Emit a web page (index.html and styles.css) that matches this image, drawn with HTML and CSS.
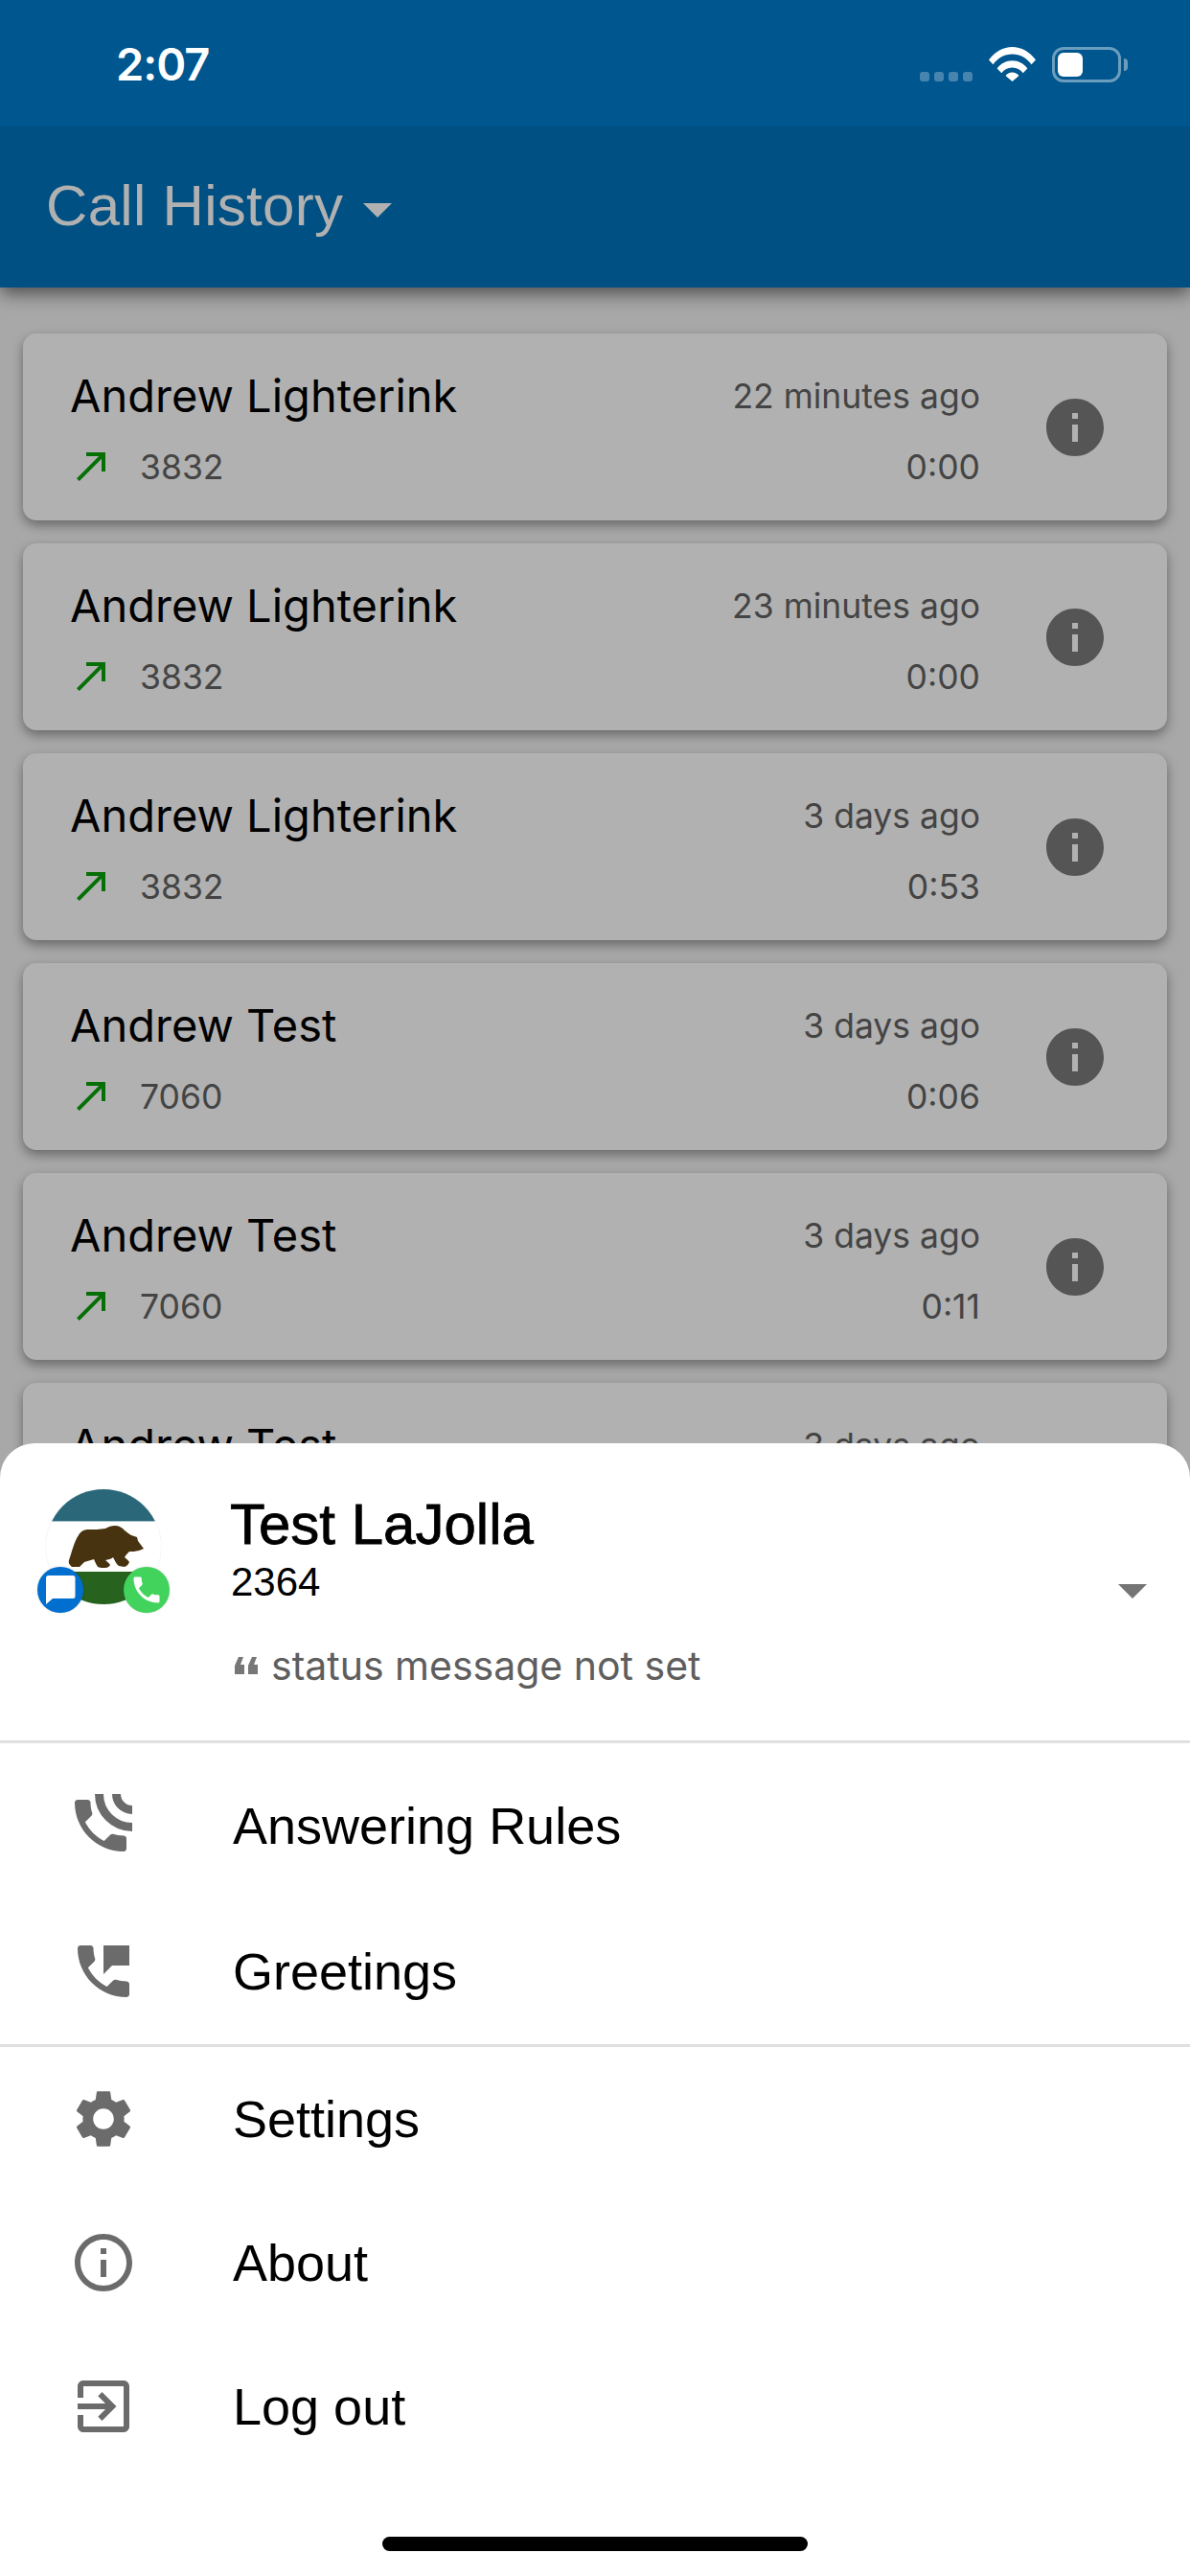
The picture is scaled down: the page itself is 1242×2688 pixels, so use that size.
FILE: index.html
```html
<!DOCTYPE html>
<html lang="en">
<head>
  <meta charset="UTF-8">
  <meta name="viewport" content="width=device-width, initial-scale=1.0">
  <title>Call History</title>
  <link rel="stylesheet" href="styles.css">
</head>
<body>
  <svg class="sprite" width="0" height="0">
    <symbol id="i-info" viewBox="0 0 24 24"><path d="M12 2C6.48 2 2 6.48 2 12s4.48 10 10 10 10-4.48 10-10S17.52 2 12 2zm1 15h-2v-6h2v6zm0-8h-2V7h2v2z"/></symbol>
    <symbol id="i-made" viewBox="0 0 24 24"><path d="M9 5v2h6.59L4 18.59 5.41 20 17 8.41V15h2V5z"/></symbol>
    <symbol id="i-drop" viewBox="0 0 24 24"><path d="M7 10l5 5 5-5z"/></symbol>
  </svg>

  <div class="screen">
    <div class="status-bar">
      <span class="clock">2:07</span>
      <div class="status-icons">
        <div class="signal"><i></i><i></i><i></i><i></i></div>
        <svg class="wifi" viewBox="0 0 49 36"><path d="M0 13.5C6.500 5 15 0 24.500 0S42.500 5 49 13.500l-4.500 4.700C39.500 11.500 32.500 7.500 24.500 7.500S9.500 11.500 4.500 18.200zM8.700 22.500C12.500 17.300 18 14.300 24.500 14.300s12 3 15.800 8.200l-4.600 4.700c-2.700-3.700-6.600-5.800-11.200-5.800s-8.500 2.100-11.200 5.800zM17.500 30c1.700-2.300 4.100-3.600 7-3.600s5.300 1.300 7 3.600l-7 6z"/></svg>
        <div class="battery"><div class="battery-fill"></div></div>
        <div class="battery-nub"></div>
      </div>
    </div>

    <header class="app-bar">
      <h1>Call History</h1>
      <svg class="app-bar-drop" viewBox="0 0 24 24"><use href="#i-drop"/></svg>
    </header>

    <main class="call-list">
      <div class="call-card">
        <div class="call-main">
          <div class="call-row"><span class="call-name">Andrew Lighterink</span><span class="call-meta">22 minutes ago</span></div>
          <div class="call-row">
            <div class="call-number"><svg class="call-arrow" viewBox="0 0 24 24"><use href="#i-made"/></svg><span class="call-meta">3832</span></div>
            <span class="call-meta">0:00</span>
          </div>
        </div>
        <svg class="call-info" viewBox="0 0 24 24"><use href="#i-info"/></svg>
      </div>
      <div class="call-card">
        <div class="call-main">
          <div class="call-row"><span class="call-name">Andrew Lighterink</span><span class="call-meta">23 minutes ago</span></div>
          <div class="call-row">
            <div class="call-number"><svg class="call-arrow" viewBox="0 0 24 24"><use href="#i-made"/></svg><span class="call-meta">3832</span></div>
            <span class="call-meta">0:00</span>
          </div>
        </div>
        <svg class="call-info" viewBox="0 0 24 24"><use href="#i-info"/></svg>
      </div>
      <div class="call-card">
        <div class="call-main">
          <div class="call-row"><span class="call-name">Andrew Lighterink</span><span class="call-meta">3 days ago</span></div>
          <div class="call-row">
            <div class="call-number"><svg class="call-arrow" viewBox="0 0 24 24"><use href="#i-made"/></svg><span class="call-meta">3832</span></div>
            <span class="call-meta">0:53</span>
          </div>
        </div>
        <svg class="call-info" viewBox="0 0 24 24"><use href="#i-info"/></svg>
      </div>
      <div class="call-card">
        <div class="call-main">
          <div class="call-row"><span class="call-name">Andrew Test</span><span class="call-meta">3 days ago</span></div>
          <div class="call-row">
            <div class="call-number"><svg class="call-arrow" viewBox="0 0 24 24"><use href="#i-made"/></svg><span class="call-meta">7060</span></div>
            <span class="call-meta">0:06</span>
          </div>
        </div>
        <svg class="call-info" viewBox="0 0 24 24"><use href="#i-info"/></svg>
      </div>
      <div class="call-card">
        <div class="call-main">
          <div class="call-row"><span class="call-name">Andrew Test</span><span class="call-meta">3 days ago</span></div>
          <div class="call-row">
            <div class="call-number"><svg class="call-arrow" viewBox="0 0 24 24"><use href="#i-made"/></svg><span class="call-meta">7060</span></div>
            <span class="call-meta">0:11</span>
          </div>
        </div>
        <svg class="call-info" viewBox="0 0 24 24"><use href="#i-info"/></svg>
      </div>
      <div class="call-card">
        <div class="call-main">
          <div class="call-row"><span class="call-name">Andrew Test</span><span class="call-meta">3 days ago</span></div>
        </div>
        <svg class="call-info" viewBox="0 0 24 24"><use href="#i-info"/></svg>
      </div>
    </main>

    <!-- bottom sheet, sits over the list -->
    <section class="sheet">
      <div class="profile">
        <div class="avatar">
          <svg class="avatar-pic" viewBox="0 0 120 120">
            <rect width="120" height="120" fill="#fff"/>
            <rect width="120" height="33" fill="#2a6879"/>
            <rect y="33" width="120" height="1" fill="#a9c3ca"/>
            <rect y="86" width="120" height="34" fill="#27621f"/>
            <path fill="#47330f" d="M24 74C27 66 29 55 34 48C36 44 40 42 44 42C50 42 56 42 62 41C65 39 69 38 72 38C76 38 80 40 82 43C85 45 87 47 89 48L95 50L96 54C98 57 100 59 102 62L97 64C93 65 90 65 87 65C85 67 83 69 82 71C84 73 86 74 87 76C86 78 85 80 82 81L76 80C73 78 72 74 70 71C68 73 65 73 62 74C64 76 66 77 67 79C66 81 64 82 62 82C59 82 56 82 54 81C52 78 51 75 50 73C47 74 43 75 40 76L35 81H27C25 79 23 77 24 74z"/>
          </svg>
          <div class="badge badge-msg">
            <svg viewBox="0 0 48 48"><path fill="#fff" d="M11.500 9h25.500a2.500 2.500 0 0 1 2.500 2.500v19a2.500 2.500 0 0 1-2.500 2.500H16L9 39V11.500A2.500 2.500 0 0 1 11.500 9z"/></svg>
          </div>
          <div class="badge badge-call">
            <svg viewBox="0 0 24 24"><path fill="#fff" d="M6.620 10.790c1.440 2.830 3.760 5.140 6.590 6.590l2.200-2.200c.27-.27.67-.36 1.020-.24 1.120.37 2.330.57 3.570.57.550 0 1 .45 1 1V20c0 .55-.45 1-1 1-9.390 0-17-7.610-17-17 0-.55.45-1 1-1h3.500c.55 0 1 .45 1 1 0 1.250.2 2.450.57 3.570.11.35.03.74-.25 1.020l-2.200 2.200z"/></svg>
          </div>
        </div>
        <div class="profile-text">
          <div class="profile-name">Test LaJolla</div>
          <div class="profile-ext">2364</div>
          <div class="profile-status">
            <svg class="quote" viewBox="0 0 24 18"><path d="M0 18V9L4 0h5L6 8h4v10zM14 18V9l4-9h5l-3 8h4v10z"/></svg>
            <span>status message not set</span>
          </div>
        </div>
        <svg class="profile-drop" viewBox="0 0 24 24"><use href="#i-drop"/></svg>
      </div>

      <nav class="menu menu-top">
        <a class="menu-item">
          <svg class="menu-icon menu-icon-talk" viewBox="0 0 24 24">
            <path d="M20 15.500c-1.250 0-2.450-.2-3.570-.57-.35-.11-.74-.03-1.020.24l-2.200 2.200c-2.830-1.440-5.150-3.750-6.590-6.590l2.200-2.210c.28-.26.36-.65.25-1C8.700 6.450 8.500 5.250 8.500 4c0-.55-.45-1-1-1H4c-.55 0-1 .45-1 1 0 9.390 7.610 17 17 17 .55 0 1-.45 1-1v-3.500c0-.55-.45-1-1-1z"/>
            <path class="arc" d="M11.500 1A11.500 11.500 0 0 0 23 12.500M17.500 1A5.500 5.500 0 0 0 23 6.500"/>
          </svg>
          <span>Answering Rules</span>
        </a>
        <a class="menu-item">
          <svg class="menu-icon" viewBox="0 0 24 24"><path d="M20 15.500c-1.250 0-2.450-.2-3.570-.57-.35-.11-.74-.03-1.020.24l-2.200 2.200c-2.830-1.440-5.150-3.750-6.590-6.590l2.200-2.210c.28-.27.36-.66.25-1.010C8.700 6.450 8.500 5.250 8.500 4c0-.55-.45-1-1-1H4c-.55 0-1 .45-1 1 0 9.390 7.610 17 17 17 .55 0 1-.45 1-1v-3.500c0-.55-.45-1-1-1zM12 3v10l3-3h6V3h-9z"/></svg>
          <span>Greetings</span>
        </a>
      </nav>

      <nav class="menu">
        <a class="menu-item">
          <svg class="menu-icon" viewBox="0 0 24 24"><path d="M19.140 12.940c.04-.3.06-.61.06-.94 0-.32-.02-.64-.07-.94l2.030-1.580c.18-.14.23-.41.12-.61l-1.920-3.320c-.12-.22-.37-.29-.59-.22l-2.390.96c-.5-.38-1.030-.7-1.620-.94l-.36-2.540c-.04-.24-.24-.41-.48-.41h-3.840c-.24 0-.43.17-.47.41l-.36 2.540c-.59.24-1.130.57-1.620.94l-2.390-.96c-.22-.08-.47 0-.59.22L2.740 8.870c-.12.21-.08.47.12.61l2.030 1.580c-.05.3-.09.63-.09.94s.02.64.07.94l-2.030 1.580c-.18.14-.23.41-.12.61l1.920 3.320c.12.22.37.29.59.22l2.390-.96c.5.38 1.030.7 1.620.94l.36 2.540c.05.24.24.41.48.41h3.840c.24 0 .44-.17.47-.41l.36-2.540c.59-.24 1.130-.56 1.620-.94l2.390.96c.22.08.47 0 .59-.22l1.920-3.320c.12-.22.07-.47-.12-.61l-2.010-1.580zM12 15.600c-1.980 0-3.600-1.620-3.600-3.600s1.620-3.600 3.600-3.600 3.600 1.620 3.600 3.600-1.620 3.600-3.600 3.600z"/></svg>
          <span>Settings</span>
        </a>
        <a class="menu-item">
          <svg class="menu-icon" viewBox="0 0 24 24"><path d="M11 7h2v2h-2zm0 4h2v6h-2zm1-9C6.480 2 2 6.480 2 12s4.480 10 10 10 10-4.480 10-10S17.520 2 12 2zm0 18c-4.410 0-8-3.590-8-8s3.590-8 8-8 8 3.590 8 8-3.590 8-8 8z"/></svg>
          <span>About</span>
        </a>
        <a class="menu-item">
          <svg class="menu-icon" viewBox="0 0 24 24"><path d="M10.090 15.590L11.500 17l5-5-5-5-1.410 1.410L12.670 11H3v2h9.670l-2.580 2.590zM19 3H5c-1.110 0-2 .9-2 2v4h2V5h14v14H5v-4H3v4c0 1.100.89 2 2 2h14c1.100 0 2-.9 2-2V5c0-1.100-.9-2-2-2z"/></svg>
          <span>Log out</span>
        </a>
      </nav>

      <div class="home-bar"></div>
    </section>
  </div>
</body>
</html>
```

FILE: styles.css
```css
* {
  margin: 0;
  padding: 0;
  box-sizing: border-box;
}

body {
  background: #a8a8a8;
  font-family: 'Liberation Sans', sans-serif;
  color: #000;
}

.sprite {
  position: absolute;
}

.screen {
  position: relative;
  width: 1242px;
  height: 2688px;
  overflow: hidden;
  display: flex;
  flex-direction: column;
}

/* status bar */
.status-bar {
  height: 132px;
  background: #00568f;
  display: flex;
  align-items: flex-start;
  justify-content: space-between;
  padding: 39px 65px 0 121px;
  position: relative;
  z-index: 2;
}

.clock {
  font-family: 'Inter', sans-serif;
  color: #fff;
  font-size: 47px;
  font-weight: 600;
  line-height: 56px;
  letter-spacing: -1px;
}

.status-icons {
  display: flex;
  align-items: flex-start;
  margin-top: 10px;
}

.signal {
  display: flex;
  gap: 5px;
  margin: 26px 17px 0 0;
}

.signal i {
  width: 10px;
  height: 10px;
  border-radius: 3px;
  background: rgba(255,255,255,0.28);
}

.wifi {
  width: 49px;
  height: 36px;
  fill: #fff;
  margin-right: 17px;
}

.battery {
  width: 72px;
  height: 37px;
  border: 3px solid rgba(255,255,255,0.42);
  border-radius: 12px;
  padding: 3px;
}

.battery-fill {
  width: 26px;
  height: 25px;
  background: #fff;
  border-radius: 6px;
}

.battery-nub {
  width: 4px;
  height: 13px;
  margin: 12px 0 0 3px;
  background: rgba(255,255,255,0.42);
  border-radius: 0 4px 4px 0;
}

/* app bar */
.app-bar {
  height: 168px;
  background: #005083;
  display: flex;
  align-items: center;
  padding: 0 0 4px 48px;
  box-shadow: 0 6px 18px rgba(0,0,0,0.55);
  position: relative;
  z-index: 1;
}

.app-bar h1 {
  font-size: 60px;
  font-weight: 400;
  letter-spacing: 0.3px;
  color: #b1b1b1;
}

.app-bar-drop {
  width: 72px;
  height: 72px;
  fill: #b1b1b1;
  margin: 8px 0 0 0;
}

/* call list */
.call-list {
  flex: 1;
  display: flex;
  flex-direction: column;
  gap: 24px;
  padding: 48px 24px 0;
}

.call-card {
  flex: 0 0 195px;
  background: #b1b1b1;
  border-radius: 14px;
  box-shadow: 0 5px 12px rgba(0,0,0,0.38);
  display: flex;
  align-items: center;
  padding: 0 60px 0 49px;
}

.call-main {
  flex: 1;
  align-self: flex-start;
  padding-top: 27px;
  font-family: 'Inter', sans-serif;
}

.call-row {
  display: flex;
  align-items: center;
  justify-content: space-between;
  height: 74px;
}

.call-name {
  font-size: 47px;
  color: #000;
}

.call-meta {
  font-size: 35.5px;
  line-height: 44px;
  margin-top: 3px;
  color: #444;
}

.call-number {
  display: flex;
  align-items: center;
  margin-left: -1px;
}

.call-arrow {
  width: 48px;
  height: 48px;
  fill: #067006;
  margin-right: 26px;
}

.call-info {
  width: 72px;
  height: 72px;
  fill: #555;
  margin-left: 63px;
}

/* bottom sheet */
.sheet {
  position: absolute;
  left: 0;
  right: 0;
  bottom: 0;
  height: 1182px;
  background: #fff;
  border-radius: 36px 36px 0 0;
  z-index: 3;
}

.profile {
  position: relative;
  height: 313px;
  display: flex;
  padding: 48px 0 0 48px;
  border-bottom: 3px solid #e0e0e0;
}

.avatar {
  position: relative;
  width: 120px;
  height: 120px;
  margin-right: 72px;
}

.avatar-pic {
  display: block;
  width: 120px;
  height: 120px;
  border-radius: 50%;
  box-shadow: 0 0 1px rgba(0,0,0,0.25);
}

.badge {
  position: absolute;
  top: 81px;
  width: 48px;
  height: 48px;
  border-radius: 50%;
  display: flex;
  align-items: center;
  justify-content: center;
  box-shadow: 0 0 2px rgba(0,0,0,0.2);
}

.badge-msg {
  left: -9px;
  background: #006fd0;
}

.badge-msg svg {
  width: 48px;
  height: 48px;
}

.badge-call {
  left: 81px;
  background: #42d35c;
}

.badge-call svg {
  width: 36px;
  height: 36px;
}

.profile-name {
  font-size: 60px;
  line-height: 70px;
  margin-top: 2px;
  -webkit-text-stroke: 0.8px #000;
}

.profile-ext {
  font-size: 42px;
  line-height: 46px;
  margin: 2px 0 0 1px;
}

.profile-status {
  display: flex;
  align-items: center;
  margin: 40px 0 0 5px;
  font-family: 'Inter', sans-serif;
  font-size: 41px;
  line-height: 48px;
  color: #5e5e5e;
}

.quote {
  width: 24px;
  height: 18px;
  fill: #777;
  margin-right: 14px;
}

.profile-drop {
  position: absolute;
  left: 1146px;
  top: 117px;
  width: 72px;
  height: 72px;
  fill: #757575;
}

.menu-top {
  padding-top: 11px;
  gap: 2px;
  padding-bottom: 1px;
  border-bottom: 3px solid #e0e0e0;
}

.menu {
  display: flex;
  flex-direction: column;
}

.menu-item {
  height: 150px;
  display: flex;
  align-items: center;
  padding-left: 72px;
  font-size: 54px;
}

.menu-icon {
  width: 72px;
  height: 72px;
  fill: #6b6b6b;
  margin-right: 99px;
}

.menu-icon-talk {
  margin: 0 102px 0 -3px;
}

.arc {
  fill: none;
  stroke: #6b6b6b;
  stroke-width: 3;
}

.home-bar {
  position: absolute;
  left: 399px;
  bottom: 26px;
  width: 444px;
  height: 15px;
  border-radius: 8px;
  background: #000;
}
```
